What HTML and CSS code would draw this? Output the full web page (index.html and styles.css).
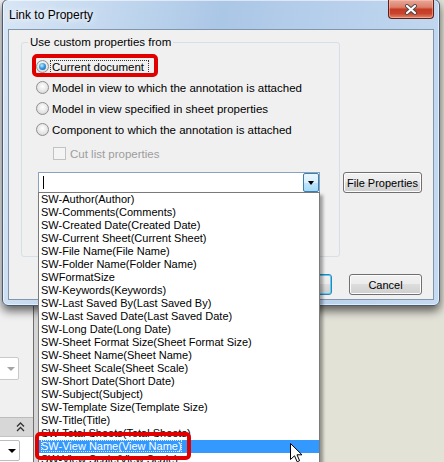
FILE: index.html
```html
<!DOCTYPE html>
<html lang="en">
<head>
    <meta charset="UTF-8">
    <title>Link to Property</title>
    <link rel="stylesheet" href="styles.css">
</head>
<body>
<div class="desktop">
    <div class="side-panel">
        <div class="side-top"></div>
        <div class="side-combo"><span class="tri grey"></span></div>
        <div class="side-gap"></div>
        <div class="side-bar">
            <svg width="9" height="10" viewBox="0 0 9 10">
                <path d="M1 4.5 L4.5 1 L8 4.5 M1 9 L4.5 5.5 L8 9" fill="none" stroke="#333" stroke-width="1.3"/>
            </svg>
        </div>
        <div class="side-bottom">
            <div class="side-combo dark"><span class="tri"></span></div>
        </div>
    </div>
    <div class="side-edge"></div>
    <div class="workspace"></div>
</div>

<div class="window">
    <div class="titlebar">
        <span class="title">Link to Property</span>
        <div class="close-btn">
            <svg width="14" height="11" viewBox="0 0 14 11">
                <path d="M3 2 L11 9 M11 2 L3 9" stroke="#4a4a4a" stroke-width="4" stroke-linecap="round"/>
                <path d="M3 2 L11 9 M11 2 L3 9" stroke="#fff" stroke-width="2.2" stroke-linecap="round"/>
            </svg>
        </div>
    </div>
    <div class="client">
        <div class="top-row">
            <fieldset class="group">
                <legend>Use custom properties from</legend>
                <div class="radio-row"><span class="radio checked"></span><span class="focus">Current document</span></div>
                <div class="radio-row"><span class="radio"></span>Model in view to which the annotation is attached</div>
                <div class="radio-row"><span class="radio"></span>Model in view specified in sheet properties</div>
                <div class="radio-row"><span class="radio"></span>Component to which the annotation is attached</div>
                <div class="check-row"><span class="checkbox"></span>Cut list properties</div>
                <div class="combo">
                    <span class="caret"></span>
                    <span class="combo-btn"><span class="tri"></span></span>
                </div>
            </fieldset>
            <div class="side-buttons">
                <div class="btn wide">File Properties</div>
            </div>
        </div>
        <div class="bottom-row">
            <div class="btn default">OK</div>
            <div class="btn">Cancel</div>
        </div>
    </div>
</div>

<ul class="drop-list">
    <li>SW-Author(Author)</li>
    <li>SW-Comments(Comments)</li>
    <li>SW-Created Date(Created Date)</li>
    <li>SW-Current Sheet(Current Sheet)</li>
    <li>SW-File Name(File Name)</li>
    <li>SW-Folder Name(Folder Name)</li>
    <li>SWFormatSize</li>
    <li>SW-Keywords(Keywords)</li>
    <li>SW-Last Saved By(Last Saved By)</li>
    <li>SW-Last Saved Date(Last Saved Date)</li>
    <li>SW-Long Date(Long Date)</li>
    <li>SW-Sheet Format Size(Sheet Format Size)</li>
    <li>SW-Sheet Name(Sheet Name)</li>
    <li>SW-Sheet Scale(Sheet Scale)</li>
    <li>SW-Short Date(Short Date)</li>
    <li>SW-Subject(Subject)</li>
    <li>SW-Template Size(Template Size)</li>
    <li>SW-Title(Title)</li>
    <li>SW-Total Sheets(Total Sheets)</li>
    <li class="selected"><span>SW-View Name(View Name)</span></li>
    <li>SW-View Scale(View Scale)</li>
</ul>

<div class="callout callout-doc"></div>
<div class="callout callout-view"></div>

<svg class="cursor" width="13" height="20" viewBox="0 0 13 20">
    <path d="M0.5 0.5 L0.5 16.5 L4.5 12.8 L7.2 18.8 L9.6 17.7 L7 11.8 L12 11.8 Z" fill="#fff" stroke="#000" stroke-width="1" stroke-linejoin="miter"/>
</svg>
</body>
</html>
```

FILE: styles.css
```css
body {
    margin: 0;
    width: 444px;
    height: 462px;
    overflow: hidden;
    position: relative;
    font-family: "Liberation Sans", Arial, sans-serif;
    font-size: 11.5px;
    color: #000;
    background-color: #e3e2d7;
}

/* background application */
.desktop {
    display: flex;
    height: 462px;
}

.side-panel {
    width: 33px;
    border-right: 1px solid #6f6f6f;
    background-color: #f0f0f0;
    display: flex;
    flex-direction: column;
}

.side-top {
    height: 357px;
}

.side-combo {
    width: 21px;
    height: 23px;
    margin-left: -2px;
    box-sizing: border-box;
    border: 1px solid #c9c9c9;
    border-radius: 2px;
    background-color: #fff;
    display: flex;
    align-items: center;
    justify-content: flex-end;
    padding-right: 3px;
}

.side-combo.dark {
    width: 22px;
    height: 21px;
    border-color: #bdbdbd;
}

.side-gap {
    height: 37px;
}

.side-bar {
    height: 18px;
    background-color: #d7d7d7;
    border-top: 1px solid #bcbcbc;
    border-bottom: 1px solid #c4c4c4;
    display: flex;
    align-items: center;
    justify-content: flex-end;
    padding-right: 8px;
}

.side-bottom {
    flex: 1;
    background-color: #fff;
    padding-top: 3px;
}

.side-edge {
    width: 4px;
    background-color: #d5d5d5;
}

.workspace {
    flex: 1;
    background-color: #e3e2d7;
}

.tri {
    width: 0;
    height: 0;
    border-left: 4px solid transparent;
    border-right: 4px solid transparent;
    border-top: 4px solid #000;
}

.tri.grey {
    border-top-color: #a5a5a5;
}

/* dialog window */
.window {
    position: absolute;
    left: 2px;
    top: -1px;
    width: 438px;
    height: 307px;
    box-sizing: border-box;
    border: 1px solid #4a5c72;
    border-radius: 6px;
    padding: 0 5px 5px 5px;
    display: flex;
    flex-direction: column;
    background: linear-gradient(100deg, #d8e6f5 0%, #c3d8ef 22%, #abc7e6 45%, #b8d0ec 70%, #c6dbf1 100%);
    box-shadow: inset 0 0 0 1px rgba(255, 255, 255, 0.55), 0 5px 10px rgba(0, 0, 0, 0.6);
}

.titlebar {
    height: 29px;
    display: flex;
    align-items: flex-start;
}

.title {
    margin: 8px 0 0 1px;
    font-size: 12px;
    line-height: 14px;
    text-shadow: 0 0 6px #fff, 0 0 10px #fff;
}

.close-btn {
    margin-left: auto;
    width: 46px;
    height: 19px;
    box-sizing: border-box;
    border: 1px solid #5e2119;
    border-top: none;
    border-radius: 0 0 4px 4px;
    display: flex;
    align-items: center;
    justify-content: center;
    background: linear-gradient(#e8a898 0%, #dc806b 40%, #c53b24 52%, #c9432c 75%, #e0876c 100%);
    box-shadow: inset 0 0 0 1px rgba(255, 200, 190, 0.5);
}

.client {
    flex: 1;
    background-color: #f0f0f0;
    border: 1px solid #8195ab;
    display: flex;
    flex-direction: column;
}

.top-row {
    display: flex;
    align-items: flex-start;
    padding: 5px 0 0 12px;
}

.group {
    width: 319px;
    box-sizing: border-box;
    margin: 0;
    padding: 7px 0 63px 14px;
    border: 1px solid #d5dfe5;
    border-radius: 3px;
    min-width: 0;
}

.group legend {
    margin-left: -8px;
    padding: 0 2px;
    line-height: 14px;
}

.radio-row {
    height: 21px;
    display: flex;
    align-items: center;
    white-space: nowrap;
}

.radio {
    width: 13px;
    height: 13px;
    box-sizing: border-box;
    border: 1px solid #8e8f8f;
    border-radius: 50%;
    margin-right: 3px;
    display: flex;
    align-items: center;
    justify-content: center;
    background: radial-gradient(circle at 50% 40%, #fff 0%, #e6e6e6 55%, #cdcdcd 100%);
}

.radio.checked {
    margin-right: 2px;
}

.radio.checked::after {
    content: "";
    width: 7px;
    height: 7px;
    border-radius: 50%;
    background: radial-gradient(circle at 40% 35%, #c2ecff 0%, #3d9de2 45%, #0e4e96 100%);
}

.focus {
    outline: 1px dotted #333;
    padding: 0 4px 0 1px;
    line-height: 12px;
}

.check-row {
    margin-top: 3px;
    height: 21px;
    padding-left: 17px;
    display: flex;
    align-items: center;
    color: #9d9d9d;
}

.checkbox {
    width: 13px;
    height: 13px;
    box-sizing: border-box;
    border: 1px solid #c2c2c2;
    background-color: #f4f4f4;
    margin-right: 4px;
}

.combo {
    margin: 8px 0 0 2px;
    width: 282px;
    height: 21px;
    box-sizing: border-box;
    border: 1px solid #8aa2bd;
    background-color: #fff;
    display: flex;
    align-items: center;
}

.caret {
    width: 1px;
    height: 13px;
    margin-left: 4px;
    background-color: #000;
}

.combo-btn {
    margin-left: auto;
    width: 16px;
    height: 19px;
    box-sizing: border-box;
    border: 1px solid #3c7fb1;
    border-radius: 2px;
    display: flex;
    align-items: center;
    justify-content: center;
    background: linear-gradient(#eaf6fd 0%, #d9f0fc 50%, #bee6fd 50%, #a7d9f5 100%);
}

.combo-btn .tri {
    border-left-width: 3.5px;
    border-right-width: 3.5px;
}

.side-buttons {
    margin: 137px 0 0 3px;
}

.btn {
    width: 73px;
    height: 21px;
    box-sizing: border-box;
    border: 1px solid #707070;
    border-radius: 3px;
    font-size: 11px;
    display: flex;
    align-items: center;
    justify-content: center;
    background: linear-gradient(#f2f2f2 0%, #ebebeb 50%, #dddddd 50%, #cfcfcf 100%);
    box-shadow: inset 0 0 0 1px #fcfcfc;
}

.btn.wide {
    width: 79px;
}

.btn.default {
    border-color: #3c7fb1;
    box-shadow: inset 0 0 0 1px #48d5fe;
}

.bottom-row {
    display: flex;
    justify-content: flex-end;
    gap: 17px;
    margin-top: 17px;
    padding-right: 11px;
}

/* open drop-down of the combo box */
.drop-list {
    position: absolute;
    left: 38px;
    top: 192px;
    width: 282px;
    height: 290px;
    box-sizing: border-box;
    margin: 0;
    padding: 0;
    list-style: none;
    border: 1px solid #7a7a7a;
    background-color: #fff;
    font-size: 11px;
    line-height: 13px;
    box-shadow: 3px 3px 3px rgba(0, 0, 0, 0.35);
}

.drop-list li {
    height: 13px;
    padding-left: 2px;
    white-space: nowrap;
}

.drop-list li.selected {
    background-color: #3399ff;
    color: #fff;
}

.drop-list li.selected span {
    outline: 1px dotted rgba(255, 255, 255, 0.8);
    outline-offset: -1px;
}

/* annotations drawn on the screenshot */
.callout {
    position: absolute;
    box-sizing: border-box;
    border: 4px solid #e00000;
    border-radius: 5px;
}

.callout-doc {
    left: 32px;
    top: 54px;
    width: 126px;
    height: 23px;
}

.callout-view {
    left: 35px;
    top: 432px;
    width: 156px;
    height: 28px;
}

.cursor {
    position: absolute;
    left: 290px;
    top: 443px;
}
```
